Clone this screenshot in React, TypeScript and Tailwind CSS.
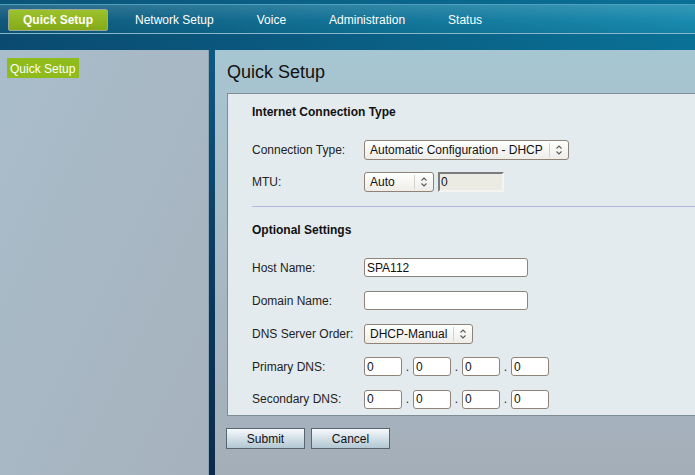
import React from "react";

const NAV_ITEMS = ["Network Setup", "Voice", "Administration", "Status"];

const Chevrons: React.FC = () => (
  <svg width="8" height="12" viewBox="0 0 8 12" fill="none" stroke="#5a5a5a" strokeWidth="1.1">
    <path d="M1.5 4.5 L4 2 L6.5 4.5" />
    <path d="M1.5 7.5 L4 10 L6.5 7.5" />
  </svg>
);

const FakeSelect: React.FC<{ value: string; width: string }> = ({ value, width }) => (
  <div
    className={`flex h-[20px] ${width} items-center rounded-[3px] border border-[#8e8376] bg-gradient-to-b from-white to-[#eeede8]`}
  >
    <span className="flex-1 truncate pl-[5px] text-[12px] text-[#111]">{value}</span>
    <span className="h-[14px] w-px bg-[#d4d1ca]" />
    <span className="flex w-[18px] justify-center">
      <Chevrons />
    </span>
  </div>
);

const TextBox: React.FC<{ value?: string; width: string }> = ({ value = "", width }) => (
  <input
    readOnly
    value={value}
    className={`h-[19px] ${width} rounded-[3px] border border-[#8e8376] bg-white pl-[2px] text-[12px] text-[#111] outline-none`}
  />
);

const Row: React.FC<{ label: string; h?: string; children: React.ReactNode }> = ({ label, h = "h-[33px]", children }) => (
  <div className={`flex ${h} items-center`}>
    <div className="w-[112px] text-[12px] text-[#222]">{label}</div>
    <div className="flex items-center">{children}</div>
  </div>
);

const IpRow: React.FC<{ label: string; h?: string }> = ({ label, h }) => (
  <Row label={label} h={h}>
    {[0, 1, 2, 3].map(i => (
      <React.Fragment key={i}>
        {i > 0 && <span className="w-[11px] text-center text-[12px] text-[#222]">.</span>}
        <TextBox value="0" width="w-[38px]" />
      </React.Fragment>
    ))}
  </Row>
);

export default function App() {
  return (
    <div className="flex h-screen flex-col overflow-hidden font-['Liberation_Sans',Arial,sans-serif]">
      {/* header */}
      <div className="h-[4px] bg-gradient-to-r from-[#0b5479] to-[#0a7196]" />
      <div className="h-px bg-[#4f9fbe]" />
      <div className="flex h-[28px] items-center bg-[linear-gradient(to_bottom,rgba(255,255,255,0.14),rgba(255,255,255,0.02)_55%,rgba(0,0,0,0.05)),linear-gradient(to_right,#0c5579,#0e6e93_45%,#1589ad)] pl-[8px] pt-[2px]">
        <div className="flex h-[22px] w-[100px] items-center justify-center rounded-[2px] border border-[#9aa79a] bg-gradient-to-b from-[#9cc22c] to-[#84ab17] text-[12px] font-bold text-white">
          Quick Setup
        </div>
        <div className="ml-[27px] flex gap-[43px]">
          {NAV_ITEMS.map(item => (
            <span key={item} className="text-[12px] text-white">
              {item}
            </span>
          ))}
        </div>
      </div>
      <div className="h-px bg-[#8bb7cb]" />
      <div className="h-[16px] bg-gradient-to-r from-[#0a4a70] to-[#0a7196]" />

      {/* body */}
      <div className="flex flex-1">
        <aside className="w-[209px] border-r border-[#8ea3b1] bg-gradient-to-br from-[#a9bdca] to-[#a6b2bd] pl-[7px] pt-[8px]">
          <div className="flex h-[20px] w-[72px] items-center bg-[#8fbb1c] pl-[3px] pt-px text-[12px] text-white">
            Quick Setup
          </div>
        </aside>
        <div className="w-[6px] bg-gradient-to-b from-[#0c5a82] via-[#0b3b62] to-[#0a2a4b]" />

        <main className="flex-1 overflow-hidden bg-gradient-to-b from-[#a6c6d2] via-[#a7b9c4] to-[#a4aeb9] pl-[12px] pt-[11px]">
          <h1 className="h-[22px] text-[18px] leading-[22px] text-[#111]">Quick Setup</h1>

          <section className="mt-[10px] w-[500px] border border-[#7f8d97] bg-[#e4ebef] pl-[24px] pt-[10px]">
            <h2 className="h-[16px] text-[12px] font-bold leading-[16px] text-[#111]">Internet Connection Type</h2>
            <div className="mt-[14px]">
              <Row label="Connection Type:" h="h-[32px]">
                <FakeSelect value="Automatic Configuration - DHCP" width="w-[205px]" />
              </Row>
              <Row label="MTU:" h="h-[32px]">
                <FakeSelect value="Auto" width="w-[70px]" />
                <input
                  readOnly
                  value="0"
                  className="ml-[4px] h-[20px] w-[66px] border-2 border-b-[#f4f4f0] border-l-[#7b7b7b] border-r-[#f4f4f0] border-t-[#7b7b7b] bg-[#ebebe4] pl-[1px] text-[12px] text-[#111] outline-none"
                />
              </Row>
            </div>

            <div className="mt-[8px] h-px bg-[#b3b9da]" />

            <h2 className="mt-[15px] h-[16px] text-[12px] font-bold leading-[16px] text-[#111]">Optional Settings</h2>
            <div className="mt-[13px]">
              <Row label="Host Name:">
                <TextBox value="SPA112" width="w-[164px]" />
              </Row>
              <Row label="Domain Name:">
                <TextBox width="w-[164px]" />
              </Row>
              <Row label="DNS Server Order:">
                <FakeSelect value="DHCP-Manual" width="w-[109px]" />
              </Row>
              <IpRow label="Primary DNS:" />
              <IpRow label="Secondary DNS:" h="h-[32px]" />
            </div>
          </section>

          <div className="-ml-px mt-[12px] flex gap-[6px]">
            {["Submit", "Cancel"].map(b => (
              <button
                key={b}
                className="h-[21px] w-[79px] border border-[#56656f] bg-gradient-to-b from-[#f6f9fb] to-[#b2c7d3] text-[12px] text-[#111]"
              >
                {b}
              </button>
            ))}
          </div>
        </main>
      </div>
    </div>
  );
}
